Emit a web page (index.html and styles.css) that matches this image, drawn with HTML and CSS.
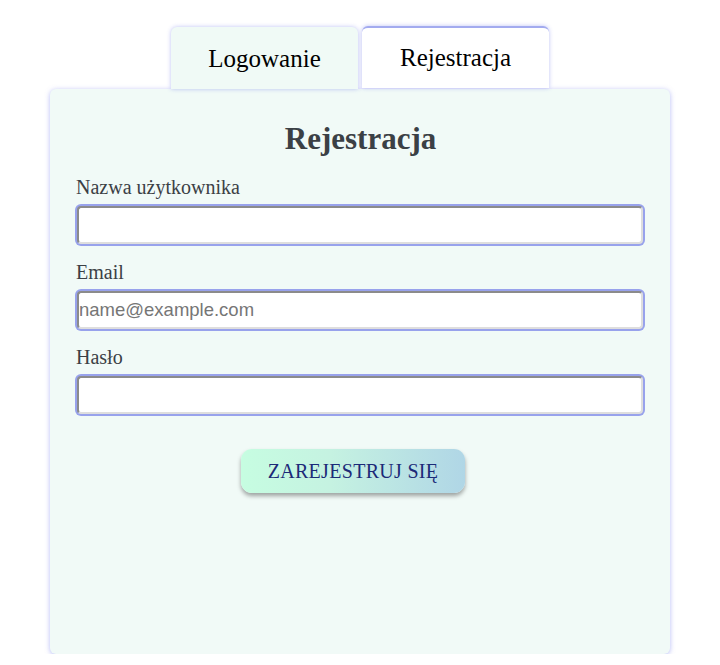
FILE: index.html
```html
<!DOCTYPE html>
<html lang="pl">
<head>
<meta charset="utf-8">
<title>Rejestracja</title>
<link rel="stylesheet" href="styles.css">
</head>
<body>
<div class="page">
  <div class="tabs">
    <button class="tab">Logowanie</button>
    <button class="tab active">Rejestracja</button>
  </div>
  <div class="card">
    <h2 class="title">Rejestracja</h2>
    <form class="form">
      <div class="field">
        <label class="label">Nazwa użytkownika</label>
        <input class="input" type="text">
      </div>
      <div class="field">
        <label class="label">Email</label>
        <input class="input" type="email" placeholder="name@example.com">
      </div>
      <div class="field">
        <label class="label">Hasło</label>
        <input class="input" type="password">
      </div>
      <div class="actions">
        <button class="submit" type="button">ZAREJESTRUJ SIĘ</button>
      </div>
    </form>
  </div>
</div>
</body>
</html>
```
FILE: styles.css
```css
html, body {
  margin: 0;
  padding: 0;
  background: #ffffff;
}
body {
  font-family: "Liberation Serif", "Times New Roman", serif;
}
.page {
  width: 620px;
  margin: 0 auto;
  padding-top: 26px;
}
.tabs {
  display: flex;
  justify-content: center;
  gap: 4px;
  height: 62px;
}
.tab {
  width: 187px;
  height: 62px;
  margin-top: 1px;
  border: none;
  border-radius: 6px 6px 0 0;
  background: #f0faf6;
  box-shadow: 0 0 4px rgba(110, 120, 235, 0.45);
  font-family: "Liberation Serif", "Times New Roman", serif;
  font-size: 25px;
  color: #000;
  padding: 0;
  padding-top: 1px;
}
.tab.active {
  background: #ffffff;
  margin-top: 0;
  height: 62px;
  border-top: 2px solid #a3abef;
  padding-top: 0;
}
.card {
  height: 565px;
  margin-top: 1px;
  background: #f1faf7;
  border-radius: 6px;
  box-shadow: 0 1px 5px rgba(110, 120, 240, 0.5);
  padding: 33px 24px 0 25px;
  box-sizing: border-box;
}
.title {
  margin: 0;
  text-align: center;
  font-size: 31px;
  line-height: 34px;
  font-weight: bold;
  color: #3b4045;
}
.form {
  margin-top: 21px;
  display: flex;
  flex-direction: column;
  gap: 18px;
}
.field {
  display: flex;
  flex-direction: column;
  gap: 8px;
}
.label {
  font-size: 20px;
  line-height: 21px;
  color: #3b4045;
  padding-left: 1px;
}
.input {
  box-sizing: border-box;
  width: 566px;
  height: 38px;
  margin: 0 0 0 2px;
  padding: 0;
  border: 2px solid;
  border-color: #8b8b8b #dedede #dedede #8b8b8b;
  border-radius: 4px;
  box-shadow: 0 0 0 2px #98a2ec;
  background: #fff;
  font-family: "Liberation Sans", Arial, sans-serif;
  font-size: 18.5px;
  color: #222;
  outline: none;
}
.input::placeholder {
  color: #767676;
}
.actions {
  display: flex;
  justify-content: flex-start;
  margin-top: 17px;
}
.submit {
  width: 224px;
  height: 44px;
  margin-left: 166px;
  border: none;
  border-radius: 11px;
  background: linear-gradient(90deg, #c6fde1 0%, #c5f2e1 40%, #b0d6e6 100%);
  box-shadow: 0 3px 4px rgba(0, 0, 0, 0.35);
  font-family: "Liberation Serif", "Times New Roman", serif;
  font-size: 20px;
  letter-spacing: 0.3px;
  color: #1c2a78;
  padding: 0;
}
```
